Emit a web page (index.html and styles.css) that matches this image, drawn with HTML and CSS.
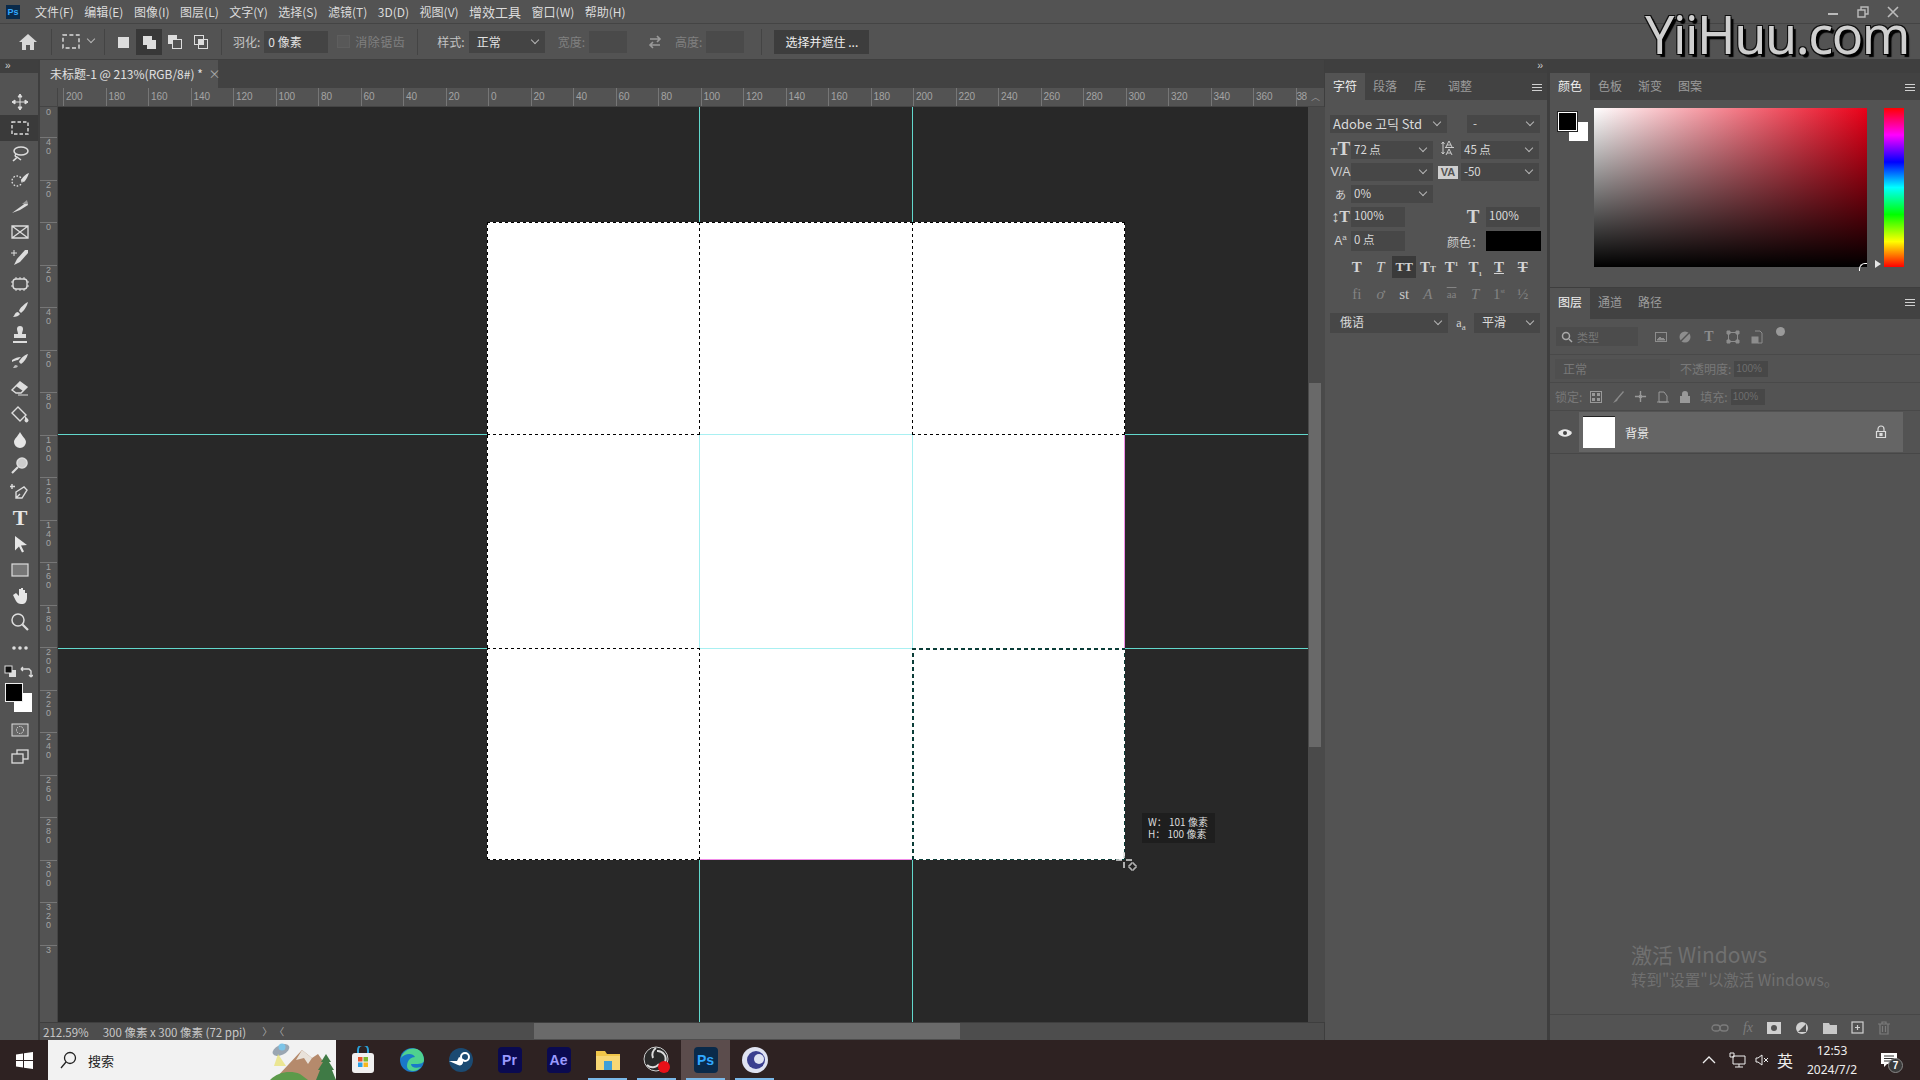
FILE: index.html
```html
<!DOCTYPE html>
<html lang="zh-CN">
<head>
  <meta charset="UTF-8">
  <title>Photoshop</title>
  <link rel="stylesheet" href="styles.css">
</head>
<body>
  <!-- menu -->
  <header class="menubar">
    <span class="ps-logo">Ps</span>
    <nav class="menu">
      <span>文件(F)</span><span>编辑(E)</span><span>图像(I)</span><span>图层(L)</span><span>文字(Y)</span><span>选择(S)</span><span>滤镜(T)</span><span>3D(D)</span><span>视图(V)</span><span class="menu-big">增效工具</span><span>窗口(W)</span><span>帮助(H)</span>
    </nav>
    <div class="win-btns">
      <svg width="14" height="14" viewBox="0 0 14 14"><path d="M2 9h10" stroke="#bbb" stroke-width="2"/></svg>
      <svg width="14" height="14" viewBox="0 0 14 14" fill="none" stroke="#bbb" stroke-width="1.4"><path d="M2 5h7v7H2zM5 5V2h7v7H9"/></svg>
      <svg width="14" height="14" viewBox="0 0 14 14"><path d="M2 2l10 10M12 2L2 12" stroke="#bbb" stroke-width="1.6"/></svg>
    </div>
  </header>

  <!-- options bar -->
  <div class="options">
    <svg class="opt-home" width="20" height="18" viewBox="0 0 20 18"><path d="M10 1L1 9h3v8h4v-5h4v5h4V9h3z" fill="#d8d8d8"/></svg>
    <i class="opt-sep sep-a"></i>
    <svg class="opt-marquee" width="18" height="16" viewBox="0 0 18 16"><rect x="1" y="1" width="16" height="13" fill="none" stroke="#ddd" stroke-width="1.4" stroke-dasharray="4 2.4"/></svg>
    <i class="chev chev-opt"></i>
    <i class="opt-sep sep-b"></i>
    <div class="modes">
      <span class="mode"><svg width="14" height="14"><rect x="2" y="2" width="11" height="11" fill="#ddd"/></svg></span>
      <span class="mode mode-on"><svg width="18" height="18"><path d="M3 3h9v4h4v9H7v-4H3z" fill="#ddd"/></svg></span>
      <span class="mode"><svg width="18" height="18"><rect x="2" y="2" width="9" height="9" fill="#ddd"/><rect x="6.5" y="6.5" width="9" height="9" fill="#535353" stroke="#ddd"/></svg></span>
      <span class="mode"><svg width="18" height="18" fill="none" stroke="#ddd"><rect x="2.5" y="2.5" width="9" height="9"/><rect x="6.5" y="6.5" width="9" height="9"/><rect x="7" y="7" width="4" height="4" fill="#ddd"/></svg></span>
    </div>
    <i class="opt-sep sep-c"></i>
    <span class="opt-label">羽化:</span>
    <span class="opt-input feather">0 像素</span>
    <i class="check"></i>
    <span class="opt-label off aa-label">消除锯齿</span>
    <i class="opt-sep sep-d"></i>
    <span class="opt-label">样式:</span>
    <span class="opt-input style-sel">正常<i class="chev"></i></span>
    <span class="opt-label off w-label">宽度:</span>
    <span class="opt-input box-w"></span>
    <svg class="opt-swap" width="16" height="16" viewBox="0 0 16 16" fill="none" stroke="#9a9a9a" stroke-width="1.6"><path d="M3 5h10M10 2l3 3-3 3M13 11H3M6 8l-3 3 3 3"/></svg>
    <span class="opt-label off h-label">高度:</span>
    <span class="opt-input box-h"></span>
    <i class="opt-sep sep-e"></i>
    <span class="mask-btn">选择并遮住 ...</span>
  </div>

  <div class="workspace">
    <!-- tools -->
    <aside class="toolbar">
      <div class="strip"><span class="arrows">››</span></div>
      <div class="tools">
        <span class="tool"><svg viewBox="0 0 20 20"><path d="M10 2v16M2 10h16M10 2L8 5h4zM10 18l-2-3h4zM2 10l3-2v4zM18 10l-3-2v4z" fill="#ddd" stroke="#ddd"/></svg></span>
        <span class="tool tool-on"><svg viewBox="0 0 20 20"><rect x="2" y="4" width="16" height="12" fill="none" stroke="#ddd" stroke-width="1.4" stroke-dasharray="3.5 2"/></svg></span>
        <span class="tool"><svg viewBox="0 0 20 20" fill="none" stroke="#ddd" stroke-width="1.5"><ellipse cx="11" cy="7" rx="7" ry="4"/><path d="M6 10c-2 2 0 3 1 3s-2 2-4 4M7 13l4 3"/></svg></span>
        <span class="tool"><svg viewBox="0 0 20 20"><circle cx="7" cy="11" r="5" fill="none" stroke="#ddd" stroke-width="1.3" stroke-dasharray="1.6 1.6"/><path d="M19 3c-3 1-7 4-8 8l3 1c2-2 4-6 5-9z" fill="#ddd"/></svg></span>
        <span class="tool"><svg viewBox="0 0 20 20"><path d="M2 17L17 6l1 3-8 5z" fill="#ddd"/><path d="M12 8l5-4 1 4z" fill="#999"/></svg></span>
        <span class="tool"><svg viewBox="0 0 20 20" fill="none" stroke="#ddd" stroke-width="1.3"><path d="M2 4h16v12H2zM2 4l16 12M18 4L2 16"/></svg></span>
        <span class="tool"><svg viewBox="0 0 20 20"><path d="M18 2l-3 0-8 9-3 6 6-3 8-9z" fill="#ddd"/><path d="M4 2v6M1 5h6" stroke="#ddd"/></svg></span>
        <span class="tool"><svg viewBox="0 0 20 20" fill="none" stroke="#ddd" stroke-width="1.4"><rect x="3" y="5" width="14" height="10" rx="3"/><path d="M6 3v2M10 3v2M14 3v2M6 15v2M10 15v2M14 15v2M1 8h2M1 12h2M17 8h2M17 12h2" stroke-width="1"/></svg></span>
        <span class="tool"><svg viewBox="0 0 20 20"><path d="M18 2c-4 2-8 6-9 9l2 2c3-2 6-7 7-11zM8 12c-3 0-3 3-5 5 3 0 6-1 7-3z" fill="#ddd"/></svg></span>
        <span class="tool"><svg viewBox="0 0 20 20"><path d="M7 3a3 3 0 0 1 6 0c0 2-1 3-1 5h4v4H4V8h4c0-2-1-3-1-5zM3 15h14v2H3z" fill="#ddd"/></svg></span>
        <span class="tool"><svg viewBox="0 0 20 20"><path d="M18 2c-4 1-8 5-9 8l2 2c3-2 6-6 7-10zM2 8c3-2 6-3 9-3l-3 3c-2 0-4 1-6 2z" fill="#ddd"/><path d="M6 13c-2 0-2 2-3 3 2 0 4 0 5-2z" fill="#bbb"/></svg></span>
        <span class="tool"><svg viewBox="0 0 20 20"><path d="M2 12l8-8 7 5-6 6H6z" fill="none" stroke="#ddd" stroke-width="1.4"/><path d="M10 4l7 5-4 4-7-5z" fill="#ddd"/><path d="M8 17h10" stroke="#ddd"/></svg></span>
        <span class="tool"><svg viewBox="0 0 20 20"><path d="M2 9l6-6 8 8-6 6z" fill="none" stroke="#ddd" stroke-width="1.4"/><path d="M15 12l3 3a2 2 0 1 1-3 0" fill="#ddd"/></svg></span>
        <span class="tool"><svg viewBox="0 0 20 20"><path d="M10 2c2 4 6 7 6 10a6 6 0 0 1-12 0c0-3 4-6 6-10z" fill="#e6e6e6"/></svg></span>
        <span class="tool"><svg viewBox="0 0 20 20" fill="none" stroke="#ddd" stroke-width="1.6"><circle cx="12" cy="7" r="5" fill="#ccc"/><path d="M8 11l-6 6" stroke-width="2.2"/></svg></span>
        <span class="tool"><svg viewBox="0 0 20 20" fill="none" stroke="#ddd" stroke-width="1.4"><path d="M6 10l8-5 3 3-5 8H6zM6 16l4-4"/><path d="M2 2v5M0 4.500h5"/></svg></span>
        <span class="tool tool-t">T</span>
        <span class="tool"><svg viewBox="0 0 20 20"><path d="M5 2l12 9-6 .5 3 6-2 1-3-6-4 4z" fill="#e6e6e6"/></svg></span>
        <span class="tool"><svg viewBox="0 0 20 20"><rect x="2" y="4" width="16" height="12" fill="#777" stroke="#ddd" stroke-width="1.2"/></svg></span>
        <span class="tool"><svg viewBox="0 0 20 20"><path d="M3 9l3 6c1 2 3 3 5 3h2c2 0 4-3 4-6V7h-2v3-6h-2v5V2h-2v7V3H9v7L6 7z" fill="#e6e6e6"/></svg></span>
        <span class="tool"><svg viewBox="0 0 20 20" fill="none" stroke="#ddd" stroke-width="1.5"><circle cx="8" cy="8" r="6"/><path d="M12.500 12.500L18 18" stroke-width="2.2"/></svg></span>
      </div>
      <div class="tool tool-more"><svg viewBox="0 0 20 20"><circle cx="4" cy="10" r="1.800" fill="#ddd"/><circle cx="10" cy="10" r="1.800" fill="#ddd"/><circle cx="16" cy="10" r="1.800" fill="#ddd"/></svg></div>
      <div class="mini-colors">
        <svg width="13" height="13"><rect x="5" y="5" width="7" height="7" fill="#ddd"/><rect x="1" y="1" width="7" height="7" fill="#111" stroke="#ddd"/></svg>
        <svg width="13" height="13" fill="none" stroke="#ddd" stroke-width="1.400"><path d="M1 4h8l2 2v6M1 4l2-2M1 4l2 2M11 12l-2-2M11 12l2-2"/></svg>
      </div>
      <div class="fg-bg"><i class="bg-sw"></i><i class="fg-sw"></i></div>
      <span class="tool tool-qm"><svg viewBox="0 0 20 20"><rect x="2" y="4" width="16" height="12" fill="#666" stroke="#ddd"/><circle cx="10" cy="10" r="3.500" fill="none" stroke="#ddd" stroke-dasharray="1.500 1"/></svg></span>
      <span class="tool"><svg viewBox="0 0 20 20" fill="none" stroke="#ddd" stroke-width="1.300"><rect x="7" y="3" width="11" height="9"/><rect x="2" y="7" width="11" height="9" fill="#535353"/></svg></span>
    </aside>

    <!-- document -->
    <main class="doc">
      <div class="doc-tabs">
        <div class="doc-tab">未标题-1 @ 213%(RGB/8#) * <span class="tab-x">×</span></div>
      </div>
      <div class="ruler-top">
        <div class="ruler-corner"></div>
        <div class="ticks-x">
          <span>200</span><span>180</span><span>160</span><span>140</span><span>120</span><span>100</span><span>80</span><span>60</span><span>40</span><span>20</span><span>0</span><span>20</span><span>40</span><span>60</span><span>80</span><span>100</span><span>120</span><span>140</span><span>160</span><span>180</span><span>200</span><span>220</span><span>240</span><span>260</span><span>280</span><span>300</span><span>320</span><span>340</span><span>360</span><span class="tick-end">38</span>
        </div>
        <div class="scroll-up">︿</div>
      </div>
      <div class="doc-mid">
        <div class="ticks-y">
          <span class="tick-first">0</span><span>4<br>0</span><span>2<br>0</span><span>0</span><span>2<br>0</span><span>4<br>0</span><span>6<br>0</span><span>8<br>0</span><span>1<br>0<br>0</span><span>1<br>2<br>0</span><span>1<br>4<br>0</span><span>1<br>6<br>0</span><span>1<br>8<br>0</span><span>2<br>0<br>0</span><span>2<br>2<br>0</span><span>2<br>4<br>0</span><span>2<br>6<br>0</span><span>2<br>8<br>0</span><span>3<br>0<br>0</span><span>3<br>2<br>0</span><span>3</span>
        </div>
        <div class="canvas">
          <i class="guide-v gv1"></i>
          <i class="guide-v gv2"></i>
          <i class="guide-h gh1"></i>
          <i class="guide-h gh2"></i>
          <div class="artboard">
            <div class="cell d-t d-l d-r d-b"></div>
            <div class="cell d-t c-b"></div>
            <div class="cell d-t d-l d-r d-b"></div>
            <div class="cell d-l c-r"></div>
            <div class="cell"></div>
            <div class="cell m-r c-l"></div>
            <div class="cell d-t d-l d-r d-b"></div>
            <div class="cell c-t m-b"></div>
            <div class="cell last d-t d-l d-r d-b"></div>
          </div>
          <div class="size-tip">W： 101 像素<br>H： 100 像素</div>
          <svg class="cursor" width="24" height="24" viewBox="0 0 24 24" fill="none" stroke="#ddd"><path d="M8 0v6M8 10v6M0 8h6M10 8h6" stroke-width="1.500"/><path d="M15 11h3v2h2v3h-2v2h-3v-2h-2v-3h2z" fill="#222"/></svg>
        </div>
        <div class="vscroll"><div class="vthumb"></div></div>
      </div>
      <div class="status">
        <span class="zoom-val">212.59%</span>
        <span class="doc-size">300 像素 x 300 像素 (72 ppi)</span>
        <span class="st-arrow">〉</span>
        <span class="st-arrow2">〈</span>
        <div class="hthumb"></div>
      </div>
    </main>

    <!-- character panel -->
    <section class="col-char">
      <div class="strip strip-r"><span class="arrows">››</span></div>
      <div class="tabs">
        <span class="tab on">字符</span><span class="tab">段落</span><span class="tab tab-s">库</span><span class="tab tab-l">调整</span>
        <span class="burger"></span>
      </div>
      <div class="char-body">
        <div class="row row-font">
          <span class="fld fw1">Adobe 고딕 Std<i class="chev"></i></span>
          <span class="fld fw2">-<i class="chev"></i></span>
        </div>
        <div class="row">
          <span class="ci ci-serif"><small>T</small>T</span><span class="fld fw3">72 点<i class="chev"></i></span>
          <span class="ci ci2"><svg width="18" height="18" viewBox="0 0 18 18" fill="none" stroke="#ccc"><path d="M3 3v12M1.500 5L3 3l1.500 2M1.500 13L3 15l1.500-2M6 8l3-6 3 6M6 16l3-6 3 6M7 14h4M7 6h4M5 8.500h9"/></svg></span><span class="fld fw4">45 点<i class="chev"></i></span>
        </div>
        <div class="row">
          <span class="ci ci-va">V/A</span><span class="fld fw3"><i class="chev"></i></span>
          <span class="ci ci2 ci-va2">VA</span><span class="fld fw4">-50<i class="chev"></i></span>
        </div>
        <div class="row">
          <span class="ci ci-ja">あ</span><span class="fld fw3">0%<i class="chev"></i></span>
        </div>
        <div class="row row-pct">
          <span class="ci ci-serif ci-big">↕T</span><span class="fld fw5">100%</span>
          <span class="ci ci-serif ci-t2">T</span><span class="fld fw6">100%</span>
        </div>
        <div class="row row-color">
          <span class="ci ci-base">A<sup>a</sup></span><span class="fld fw5">0 点</span>
          <span class="color-lb">颜色：</span><i class="black-sw"></i>
        </div>
        <div class="btn-row">
          <span>T</span><span class="it">T</span><span class="b-on">TT</span><span>T<small>T</small></span><span>T<sup>1</sup></span><span>T<sub>1</sub></span><span class="ul">T</span><span class="st">T</span>
        </div>
        <div class="btn-row dim">
          <span>fi</span><span class="it">ơ</span><span class="mid">st</span><span class="it">A</span><span class="sm">aa</span><span class="it">T</span><span>1<sup>st</sup></span><span>½</span>
        </div>
        <div class="row row-last">
          <span class="fld fw7">俄语<i class="chev"></i></span>
          <span class="ci aa">a<sub>a</sub></span>
          <span class="fld fw8">平滑<i class="chev"></i></span>
        </div>
      </div>
    </section>

    <!-- color + layers -->
    <section class="col-right">
      <div class="strip"></div>
      <div class="tabs">
        <span class="tab on">颜色</span><span class="tab">色板</span><span class="tab">渐变</span><span class="tab">图案</span>
        <span class="burger"></span>
      </div>
      <div class="color-body">
        <div class="swatches"><i class="bg-sw2"></i><i class="fg-sw2"></i></div>
        <div class="field"><i class="field-mark"></i></div>
        <i class="hue-arrow"></i>
        <div class="hue"></div>
      </div>
      <div class="tabs tabs-layers">
        <span class="tab on">图层</span><span class="tab">通道</span><span class="tab">路径</span>
        <span class="burger"></span>
      </div>
      <div class="layers-body">
        <div class="l-row l-filter">
          <span class="l-search"><svg width="12" height="12" viewBox="0 0 12 12" fill="none" stroke="#aaa" stroke-width="1.500"><circle cx="5" cy="5" r="3.500"/><path d="M8 8l3 3"/></svg>类型</span>
          <span class="l-icons">
            <svg width="14" height="14" viewBox="0 0 14 14" fill="none" stroke="#8d8d8d"><rect x="1.500" y="2.500" width="11" height="9"/><path d="M3 10l3-3 2 2 1-1 2 2z" fill="#8d8d8d"/></svg>
            <svg width="14" height="14" viewBox="0 0 14 14"><circle cx="7" cy="7" r="5.500" fill="#8d8d8d"/><path d="M3 11L11 3" stroke="#535353" stroke-width="1.500"/></svg>
            <b class="l-t">T</b>
            <svg width="14" height="14" viewBox="0 0 14 14" fill="none" stroke="#8d8d8d"><rect x="2.500" y="2.500" width="9" height="9"/><path d="M1 1h3v3H1zM10 1h3v3h-3zM1 10h3v3H1zM10 10h3v3h-3z" fill="#8d8d8d"/></svg>
            <svg width="14" height="14" viewBox="0 0 14 14" fill="none" stroke="#8d8d8d"><path d="M5 1h5l2 2v10H8"/><rect x="2" y="7" width="6" height="6" fill="#8d8d8d"/></svg>
            <i class="l-dot"></i>
          </span>
        </div>
        <div class="l-row l-blend">
          <span class="l-sel">正常</span>
          <span class="l-lb">不透明度:</span>
          <span class="l-pct">100%</span>
        </div>
        <div class="l-row l-lock">
          <span class="l-lb">锁定:</span>
          <span class="lock-icons">
            <svg width="12" height="12"><rect x="0.500" y="0.500" width="11" height="11" fill="none" stroke="#999"/><path d="M2 2h3v3H2zM7 7h3v3H7zM7 2h3v3H7zM2 7h3v3H2z" fill="#999"/></svg>
            <svg width="14" height="14" viewBox="0 0 14 14"><path d="M12 1L6 8l-1 1-3 4 4-2 1-2 6-7z" fill="#8a8a8a"/></svg>
            <svg width="13" height="13" viewBox="0 0 14 14"><path d="M7 1v12M1 7h12" stroke="#999" stroke-width="1.500"/><circle cx="7" cy="7" r="2" fill="#999"/></svg>
            <svg width="14" height="12" viewBox="0 0 14 12" fill="none" stroke="#999"><path d="M3 1v10h8V5L8 1zM1 11h12"/></svg>
            <svg width="12" height="13" viewBox="0 0 12 13"><path d="M3 6V4a3 3 0 0 1 6 0v2h2v7H1V6z" fill="#999"/></svg>
          </span>
          <span class="l-lb l-fill">填充:</span>
          <span class="l-pct">100%</span>
        </div>
        <div class="layer-row">
          <span class="eye"><svg width="14" height="10" viewBox="0 0 14 10"><path d="M0 5c3-5 11-5 14 0-3 5-11 5-14 0z" fill="#e8e8e8"/><circle cx="7" cy="5" r="2" fill="#444"/></svg></span>
          <div class="layer-item">
            <i class="thumb"></i>
            <span class="layer-name">背景</span>
            <svg class="layer-lock" width="12" height="14" viewBox="0 0 12 14" fill="none" stroke="#ddd" stroke-width="1.200"><path d="M3 6V4a3 3 0 0 1 6 0v2M1.500 6.500h9v6h-9z"/><rect x="5" y="8.500" width="2" height="2" fill="#ddd"/></svg>
          </div>
        </div>
        <div class="activate">
          <div class="act-1">激活 Windows</div>
          <div class="act-2">转到"设置"以激活 Windows。</div>
        </div>
        <div class="l-foot">
          <svg width="18" height="10" viewBox="0 0 18 10" fill="none" stroke="#7c7c7c" stroke-width="1.300"><rect x="1" y="2" width="8" height="6" rx="3"/><rect x="9" y="2" width="8" height="6" rx="3"/></svg>
          <span class="fx">fx</span>
          <svg width="14" height="12"><rect width="14" height="12" fill="#d0d0d0"/><circle cx="7" cy="6" r="3" fill="#535353"/></svg>
          <svg width="14" height="14" viewBox="0 0 14 14"><circle cx="7" cy="7" r="6" fill="#d0d0d0"/><path d="M3 11l8-8v8z" fill="#535353"/></svg>
          <svg width="14" height="12" viewBox="0 0 14 12"><path d="M0 1h6l1 2h7v9H0z" fill="#c8c8c8"/></svg>
          <svg width="13" height="13" viewBox="0 0 13 13" fill="none" stroke="#d0d0d0" stroke-width="1.200"><rect x="1" y="1" width="11" height="11"/><path d="M6.500 4v5M4 6.500h5"/></svg>
          <svg width="12" height="14" viewBox="0 0 12 14" fill="none" stroke="#7c7c7c" stroke-width="1.200"><path d="M0 3h12M4 3V1h4v2M2 3v10h8V3M4.500 5v6M7.500 5v6"/></svg>
        </div>
      </div>
    </section>
  </div>

  <!-- taskbar -->
  <footer class="taskbar">
    <span class="start"><svg width="17" height="17" viewBox="0 0 17 17"><path d="M0 2.500L7 1.500v6.500H0zM8 1.300L17 0v8H8zM0 9h7v6.500l-7-1zM8 9h9v8l-9-1.300z" fill="#fff"/></svg></span>
    <div class="search">
      <svg width="18" height="18" viewBox="0 0 18 18" fill="none" stroke="#222" stroke-width="1.300"><circle cx="11" cy="7" r="5.500"/><path d="M7 11l-5 6"/></svg>
      <span>搜索</span>
      <svg class="search-art" width="76" height="40" viewBox="0 0 76 40"><path d="M14 40L42 10l10 8 6-4 18 26z" fill="#b58a6c"/><path d="M42 10l-6 10 8-2 4 6 4-6z" fill="#e9e2da"/><path d="M10 40c8-8 20-10 30-6l8 6z" fill="#5c9a4a"/><path d="M66 14l5 8h-2l5 8h-2l4 10H56l4-10h-2l5-8h-2z" fill="#3f7a45"/><ellipse cx="21" cy="10" rx="9" ry="5" fill="#9aa6b2" transform="rotate(-25 21 10)"/><circle cx="22" cy="7" r="3.500" fill="#7cc4e8"/><path d="M18 14l-4 12h12z" fill="#e8e27a" opacity=".8"/></svg>
    </div>
    <div class="task-icons">
      <span class="ti"><svg width="26" height="28" viewBox="0 0 26 28"><path d="M8 7V4a5 5 0 0 1 10 0v3" fill="none" stroke="#2aa0d8" stroke-width="2"/><rect x="2" y="7" width="22" height="20" rx="3" fill="#f0f0f0"/><rect x="8" y="11" width="4.500" height="4.500" fill="#e8532a"/><rect x="13.500" y="11" width="4.500" height="4.500" fill="#7db82e"/><rect x="8" y="16.500" width="4.500" height="4.500" fill="#2aa0e8"/><rect x="13.500" y="16.500" width="4.500" height="4.500" fill="#f5b71e"/></svg></span>
      <span class="ti"><svg width="26" height="26" viewBox="0 0 26 26"><circle cx="13" cy="13" r="12" fill="#1a78c8"/><path d="M2 11C4 3 12 0 18 2c5 2 7 7 7 11 0 3-3 4-8 4h-5c0 3 4 5 10 3-3 4-8 5-12 3C6 21 8 10 16 10c-2-4-10-4-14 1z" fill="#4fd18f"/></svg></span>
      <span class="ti"><svg width="26" height="26" viewBox="0 0 26 26"><circle cx="13" cy="13" r="12" fill="#1b4a72"/><circle cx="17" cy="10" r="4" fill="none" stroke="#fff" stroke-width="2"/><path d="M1 14l9 4a3.500 3.500 0 0 0 5-4l2-1-6-3-2 4z" fill="#fff"/></svg></span>
      <span class="ti"><b class="app app-pr">Pr</b></span>
      <span class="ti"><b class="app app-ae">Ae</b></span>
      <span class="ti ti-open"><svg width="26" height="24" viewBox="0 0 26 24"><path d="M1 3h9l2 3h13v16H1z" fill="#f0c64a"/><path d="M1 8h24v14H1z" fill="#f7d774"/><rect x="9" y="13" width="8" height="9" fill="#3f9fd8"/></svg></span>
      <span class="ti ti-open"><svg width="28" height="28" viewBox="0 0 28 28"><circle cx="13" cy="13" r="12" fill="#2a2a2a" stroke="#ccc"/><path d="M13 2a8 8 0 0 0-3 10M4 19a8 8 0 0 0 12-1M22 16a8 8 0 0 0-8-11" fill="none" stroke="#ddd" stroke-width="2"/><circle cx="21" cy="21" r="6" fill="#e81018"/></svg></span>
      <span class="ti ti-open ti-on"><b class="app app-ps">Ps</b></span>
      <span class="ti ti-open"><svg width="28" height="28" viewBox="0 0 28 28"><circle cx="14" cy="14" r="13" fill="#dfe3f2"/><circle cx="15" cy="14" r="9" fill="#3a3f8f"/><circle cx="18" cy="13" r="5" fill="#dfe3f2"/></svg></span>
    </div>
    <div class="tray">
      <svg width="14" height="8" viewBox="0 0 14 8" fill="none" stroke="#eee" stroke-width="1.300"><path d="M1 7l6-6 6 6"/></svg>
      <svg width="17" height="16" viewBox="0 0 17 16" fill="none" stroke="#eee"><path d="M4 4h12v8H4zM1 1h4v4H1zM10 12v3M6 15h8"/></svg>
      <span class="tray-vol"><svg width="14" height="14" viewBox="0 0 14 14" fill="none" stroke="#eee"><path d="M1 5h2l4-3v10L3 9H1zM9 5l4 4M13 5L9 9"/></svg></span>
      <span class="tray-lang">英</span>
      <div class="clock"><div>12:53</div><div>2024/7/2</div></div>
      <span class="notify"><svg width="16" height="14" viewBox="0 0 16 14"><path d="M0 0h16v11H6l-3 3v-3H0z" fill="#fff"/><path d="M3 3h10M3 5.500h10M3 8h7" stroke="#333"/></svg><b class="badge">7</b></span>
    </div>
  </footer>

  <div class="watermark">YiiHuu.com</div>
</body>
</html>
```

FILE: styles.css
```css
* {
  box-sizing: border-box;
}
html, body {
  margin: 0;
  height: 100%;
}
body {
  width: 1920px;
  height: 1080px;
  overflow: hidden;
  display: flex;
  flex-direction: column;
  background: #535353;
  color: #d6d6d6;
  font-family: "Noto Sans CJK SC", "Noto Sans", sans-serif;
  font-size: 12px;
  position: relative;
}
i {
  display: block;
}

/* menu */
.menubar {
  height: 24px;
  flex: none;
  display: flex;
  align-items: center;
  background: #535353;
  border-bottom: 1px solid #444;
}
.ps-logo {
  width: 14px;
  height: 14px;
  margin-left: 6px;
  background: #0a2a4a;
  color: #31a8ff;
  font: bold 9px/14px "Liberation Sans", sans-serif;
  text-align: center;
}
.menu {
  display: flex;
  gap: 10.500px;
  margin-left: 15px;
  color: #dcdcdc;
  line-height: 22px;
}
.menu-big {
  font-size: 13px;
}
.win-btns {
  margin-left: auto;
  margin-right: 20px;
  display: flex;
  gap: 16px;
}

/* options */
.options {
  height: 36px;
  flex: none;
  display: flex;
  align-items: center;
  background: #535353;
  border-bottom: 1px solid #3f3f3f;
  position: relative;
}
.opt-home {
  margin-left: 18px;
}
.opt-sep {
  width: 1px;
  height: 26px;
  background: #444;
}
.sep-a { margin-left: 13px; }
.opt-marquee { margin-left: 10px; }
.chev-opt { margin-left: 8px; position: static !important; }
.sep-b { margin-left: 10px; }
.modes {
  display: flex;
  margin-left: 5px;
}
.mode {
  width: 26px;
  height: 26px;
  display: flex;
  align-items: center;
  justify-content: center;
}
.mode-on {
  background: #383838;
}
.sep-c { margin-left: 7px; }
.opt-label {
  color: #c4c4c4;
  margin-left: 11px;
}
.opt-label.off {
  color: #808080;
}
.opt-input {
  display: flex;
  align-items: center;
  height: 22px;
  background: #444;
  padding-left: 4px;
  color: #e2e2e2;
  position: relative;
  margin-left: 4px;
}
.feather { width: 64px; }
.check {
  width: 13px;
  height: 13px;
  margin-left: 9px;
  background: #585858;
  border: 1px solid #5e5e5e;
}
.aa-label { margin-left: 5px; letter-spacing: 0.5px; }
.sep-d { margin-left: 12px; margin-right: 19px; }
.options .sep-d + .opt-label { margin-left: 0; }
.style-sel { width: 76px; padding-left: 8px; }
.w-label { margin-left: 13px; }
.box-w { width: 38px; background: #4a4a4a; }
.opt-swap { margin-left: 20px; }
.h-label { margin-left: 12px; }
.box-h { width: 38px; background: #4a4a4a; }
.sep-e { margin-left: 17px; }
.mask-btn {
  margin-left: 12px;
  width: 95px;
  height: 24px;
  line-height: 23px;
  text-align: center;
  background: #3d3d3d;
  color: #ededed;
}

/* carets for selects */
.chev {
  position: absolute;
  right: 7px;
  top: 50%;
  width: 6px;
  height: 6px;
  margin-top: -5px;
  border-right: 1px solid #b5b5b5;
  border-bottom: 1px solid #b5b5b5;
  transform: rotate(45deg);
}

.workspace {
  flex: 1;
  min-height: 0;
  display: flex;
}
.strip {
  height: 13px;
  background: #3f3f3f;
  color: #cfcfcf;
  font: 10px/11px "Liberation Sans", sans-serif;
  padding-left: 5px;
}
.strip-r {
  text-align: right;
  padding-right: 5px;
}
.arrows {
  letter-spacing: -1px;
}

/* tools */
.toolbar {
  width: 40px;
  flex: none;
  background: #535353;
  border-right: 2px solid #3e3e3e;
  display: flex;
  flex-direction: column;
}
.tools {
  margin-top: 16px;
}
.tool {
  display: flex;
  width: 38px;
  height: 26px;
  align-items: center;
  justify-content: center;
  flex: none;
  padding-left: 2px;
}
.tool svg {
  width: 20px;
  height: 20px;
}
.tool-on {
  background: #3a3a3a;
}
.tool-t {
  font: bold 22px/26px "Liberation Serif", serif;
  color: #e6e6e6;
}
.mini-colors {
  display: flex;
  justify-content: space-between;
  padding: 0 5px 0 4px;
  margin-top: 4px;
}
.fg-bg {
  position: relative;
  height: 29px;
  margin: 5px 0 0 5px;
  width: 28px;
}
.fg-sw, .bg-sw {
  position: absolute;
  width: 18px;
  height: 19px;
}
.fg-sw {
  left: 0;
  top: 0;
  background: #000;
  border: 1px solid #eee;
}
.bg-sw {
  left: 9px;
  top: 10px;
  background: #fff;
}
.tool-qm {
  margin-top: 5px;
  margin-bottom: 1px;
}

/* document */
.doc {
  width: 1285px;
  flex: none;
  display: flex;
  flex-direction: column;
  border-right: 1px solid #3e3e3e;
}
.doc-tabs {
  height: 28px;
  background: #424242;
  flex: none;
}
.doc-tab {
  width: 178px;
  height: 28px;
  padding-left: 10px;
  line-height: 27px;
  background: #535353;
  color: #e0e0e0;
  font-size: 12px;
  white-space: nowrap;
}
.tab-x {
  color: #aaa;
  margin-left: 3px;
}
.ruler-top {
  height: 19px;
  flex: none;
  display: flex;
  background: #535353;
  border-bottom: 1px solid #444;
}
.ruler-corner {
  width: 18px;
  flex: none;
  border-right: 1px solid #444;
}
.ticks-x {
  flex: 1;
  display: flex;
  padding-left: 5px;
  overflow: hidden;
  white-space: nowrap;
}
.ticks-x span {
  width: 42.5px;
  flex: none;
  border-left: 1px solid #767676;
  padding-left: 2px;
  font: 10px/18px "Liberation Sans", sans-serif;
  color: #a4a4a4;
}
.ticks-x .tick-end {
  width: 12.500px;
  padding-left: 0;
  letter-spacing: -0.500px;
}
.scroll-up {
  width: 17px;
  flex: none;
  font-size: 9px;
  line-height: 18px;
  text-align: center;
  color: #999;
}
.doc-mid {
  flex: 1;
  min-height: 0;
  display: flex;
}
.ticks-y {
  width: 18px;
  flex: none;
  overflow: hidden;
  border-right: 1px solid #444;
  background: #535353;
}
.ticks-y span {
  display: block;
  height: 42.5px;
  padding-left: 6px;
  border-top: 1px solid #767676;
  font: 9px/9px "Liberation Sans", sans-serif;
  color: #a4a4a4;
}
.ticks-y .tick-first {
  height: 30px;
  border-top: none;
  padding-top: 1px;
}
.canvas {
  width: 1250px;
  flex: none;
  background: #282828;
  position: relative;
  padding: 115px 0 0 429px;
  overflow: hidden;
}
.artboard {
  position: relative;
  z-index: 1;
  width: 638px;
  height: 638px;
  background: #fff;
  display: grid;
  grid-template-columns: 213px 212px 213px;
  grid-template-rows: 213px 213px 212px;
}
/* each cell paints its own selection edges */
.cell {
  background-image: var(--top, none), var(--right, none), var(--bottom, none), var(--left, none);
  background-position: top, right, bottom, left;
  background-size: 100% 1px, 1px 100%, 100% 1px, 1px 100%;
  background-repeat: no-repeat;
}
.cell.last {
  background-size: 100% 2px, 1px 100%, 100% 1px, 2px 100%;
  --dash-x: repeating-linear-gradient(90deg, #0b3d38 0 4px, transparent 4px 7px);
  --dash-y: repeating-linear-gradient(0deg, #0b3d38 0 4px, transparent 4px 7px);
}
.cell {
  --dash-x: repeating-linear-gradient(90deg, #000 0 3px, transparent 3px 6px);
  --dash-y: repeating-linear-gradient(0deg, #000 0 3px, transparent 3px 6px);
  --cyan: linear-gradient(#a9f0f2, #a9f0f2);
  --pink: linear-gradient(#f08ce8, #f08ce8);
}
.cell.last {
  --dash-x: repeating-linear-gradient(90deg, #0b3d38 0 4px, transparent 4px 7px);
  --dash-y: repeating-linear-gradient(0deg, #0b3d38 0 4px, transparent 4px 7px);
}
.d-t { --top: var(--dash-x); }
.d-b { --bottom: var(--dash-x); }
.d-l { --left: var(--dash-y); }
.d-r { --right: var(--dash-y); }
.c-t { --top: var(--cyan); }
.c-b { --bottom: var(--cyan); }
.c-l { --left: var(--cyan); }
.c-r { --right: var(--cyan); }
.m-r { --right: var(--pink); }
.m-b { --bottom: var(--pink); }
.guide-v, .guide-h {
  position: absolute;
  background: #62d8cc;
}
.guide-v {
  top: 0;
  bottom: 0;
  width: 1px;
}
.guide-h {
  left: 0;
  right: 0;
  height: 1px;
}
.gv1 { left: 641px; }
.gv2 { left: 854px; }
.gh1 { top: 327px; }
.gh2 { top: 541px; }
.size-tip {
  position: absolute;
  left: 1084px;
  top: 706px;
  width: 73px;
  height: 30px;
  padding: 3px 0 0 6px;
  background: #1e1e1e;
  color: #dcdcdc;
  font-size: 10px;
  line-height: 12px;
  white-space: nowrap;
  z-index: 3;
}
.cursor {
  position: absolute;
  left: 1058px;
  top: 745px;
  z-index: 3;
}
.vscroll {
  width: 17px;
  flex: none;
  background: #4a4a4a;
  padding: 276px 4px 0 1px;
}
.vthumb {
  height: 364px;
  background: #696969;
}
.status {
  height: 18px;
  flex: none;
  background: #4d4d4d;
  border-top: 1px solid #3e3e3e;
  display: flex;
  align-items: center;
  position: relative;
  color: #c8c8c8;
  font-size: 11.500px;
  white-space: nowrap;
}
.zoom-val {
  margin-left: 3px;
}
.doc-size {
  margin-left: 14px;
}
.st-arrow, .st-arrow2 {
  color: #aaa;
  font-size: 10px;
}
.st-arrow { margin-left: 16px; }
.st-arrow2 { margin-left: 2px; }
.hthumb {
  position: absolute;
  left: 494px;
  top: 0;
  width: 426px;
  height: 16px;
  background: #6a6a6a;
}

/* panel tabs */
.tabs {
  height: 27px;
  display: flex;
  background: #424242;
  color: #9c9c9c;
  position: relative;
  flex: none;
}
.tab {
  width: 40px;
  line-height: 26px;
  text-align: center;
  font-size: 12px;
}
.tab-s { width: 30px; }
.tab-l { width: 50px; }
.tab.on {
  background: #535353;
  color: #f0f0f0;
}
.burger {
  position: absolute;
  right: 5px;
  top: 11px;
  width: 10px;
  height: 7px;
  border-top: 1px solid #d0d0d0;
  border-bottom: 1px solid #d0d0d0;
}
.burger::after {
  content: "";
  display: block;
  margin-top: 2px;
  border-top: 1px solid #d0d0d0;
}

/* character panel */
.col-char {
  width: 225px;
  flex: none;
  background: #535353;
  border-right: 3px solid #3e3e3e;
}
.char-body {
  padding: 15px 6px 0 5px;
}
.row {
  display: flex;
  align-items: center;
  height: 18px;
  margin-bottom: 4px;
}
.row-font {
  margin-bottom: 8px;
}
.row-pct {
  height: 20px;
  margin-top: 1px;
}
.row-color {
  height: 20px;
  margin-bottom: 5px;
}
.row-last {
  height: 20px;
  margin-top: 8px;
}
.fld {
  display: block;
  position: relative;
  height: 100%;
  background: #474747;
  color: #dadada;
  padding-left: 3px;
  line-height: 17px;
  font-size: 11.500px;
  white-space: nowrap;
}
.fw1 { width: 117px; font-size: 13px; }
.fw2 { width: 73px; margin-left: 20px; padding-left: 6px; }
.fw3 { width: 82px; }
.fw4 { width: 78px; }
.fw5 { width: 54px; }
.fw6 { width: 54px; }
.fw7 { width: 118px; padding-left: 10px; font-size: 12px; }
.fw8 { width: 66px; padding-left: 8px; font-size: 12px; }
.ci {
  width: 21px;
  flex: none;
  text-align: center;
  color: #d4d4d4;
  line-height: 18px;
}
.ci-serif {
  font: bold 19px/18px "Liberation Serif", serif;
}
.ci-serif small {
  font-size: 10px;
}
.ci2 {
  width: 25px;
  margin-left: 3px;
}
.ci-va {
  font: 12.500px/18px "Liberation Sans", sans-serif;
}
.ci-va2 {
  font: bold 11px/13px "Liberation Sans", sans-serif;
  background: #cfcfcf;
  color: #535353;
  height: 13px;
  width: 20px;
  margin-left: 5px;
  margin-right: 3px;
}
.ci-ja {
  font-size: 11px;
}
.ci-big {
  font-size: 16px;
  white-space: nowrap;
}
.ci-t2 {
  width: 26px;
  margin-left: 55px;
}
.ci-base {
  font: 12px/18px "Liberation Sans", sans-serif;
}
.ci-base sup {
  font-size: 8px;
  line-height: 0;
}
.color-lb {
  margin-left: 42px;
  width: 39px;
  color: #cfcfcf;
}
.black-sw {
  width: 55px;
  height: 20px;
  background: #000;
}
.btn-row {
  display: flex;
  padding-left: 15px;
  height: 22px;
  font: bold 15px/22px "Liberation Serif", serif;
  color: #d4d4d4;
  margin-bottom: 5px;
}
.btn-row span {
  width: 23.700px;
  text-align: center;
  white-space: nowrap;
}
.btn-row small { font-size: 9px; }
.btn-row sup, .btn-row sub { font-size: 7px; line-height: 0; }
.btn-row .it { font-style: italic; font-weight: normal; }
.btn-row .b-on { background: #3a3a3a; font-size: 13px; }
.btn-row .ul { text-decoration: underline; }
.btn-row .st { text-decoration: line-through; }
.btn-row.dim { color: #848484; font-weight: normal; }
.btn-row .mid { color: #c8c8c8; }
.btn-row .sm { font-size: 11px; text-decoration: overline; }
.aa {
  font: 12px/18px "Liberation Serif", serif;
  width: 26px;
}
.aa sub { font-size: 9px; line-height: 0; }

/* color panel */
.col-right {
  flex: 1;
  min-width: 0;
  display: flex;
  flex-direction: column;
  background: #535353;
}
.color-body {
  height: 188px;
  flex: none;
  display: flex;
  padding-top: 8px;
  position: relative;
  border-bottom: 1px solid #3e3e3e;
}
.swatches {
  position: relative;
  width: 44px;
  flex: none;
}
.fg-sw2, .bg-sw2 {
  position: absolute;
  width: 19px;
  height: 19px;
}
.fg-sw2 {
  left: 8px;
  top: 4px;
  background: #000;
  border: 1px solid #fff;
  outline: 1px solid #222;
}
.bg-sw2 {
  left: 19px;
  top: 14px;
  background: #fff;
}
.field {
  width: 273px;
  height: 159px;
  flex: none;
  position: relative;
  background: linear-gradient(to bottom, transparent, #000), linear-gradient(to right, #fff, #ea0018);
}
.field-mark {
  position: absolute;
  right: 0;
  bottom: -4px;
  width: 8px;
  height: 8px;
  border-left: 1px solid #fff;
  border-top: 1px solid #fff;
  border-top-left-radius: 6px;
}
.hue-arrow {
  width: 0;
  height: 0;
  margin: 152px 0 0 8px;
  border-left: 6px solid #e6e6e6;
  border-top: 4px solid transparent;
  border-bottom: 4px solid transparent;
}
.hue {
  width: 20px;
  height: 159px;
  margin-left: 3px;
  background: linear-gradient(to bottom, #f00 0%, #f0f 17%, #00f 34%, #0ff 50%, #0f0 67%, #ff0 84%, #f00 100%);
}
.tabs-layers {
  height: 31px;
}
.tabs-layers .tab {
  line-height: 28px;
}
.layers-body {
  flex: 1;
  min-height: 0;
  display: flex;
  flex-direction: column;
  position: relative;
  color: #787878;
}
.l-row {
  display: flex;
  align-items: center;
  height: 28px;
  padding-left: 5px;
  border-bottom: 1px solid #494949;
}
.l-filter { height: 36px; padding-left: 6px; }
.l-search {
  display: flex;
  align-items: center;
  gap: 4px;
  width: 82px;
  height: 19px;
  padding-left: 5px;
  background: #4c4c4c;
  font-size: 11px;
}
.l-icons {
  display: flex;
  align-items: center;
  gap: 10px;
  margin-left: 16px;
}
.l-t {
  width: 14px;
  text-align: center;
  font: bold 14px/14px "Liberation Serif", serif;
  color: #8d8d8d;
}
.l-dot {
  width: 9px;
  height: 9px;
  border-radius: 50%;
  background: #9a9a9a;
  margin: -10px 0 0 2px;
}
.l-sel {
  width: 115px;
  padding-left: 8px;
  height: 20px;
  line-height: 19px;
  background: #4f4f4f;
}
.l-blend .l-lb { margin-left: 10px; }
.l-pct {
  width: 34px;
  height: 16px;
  margin-left: 3px;
  background: #474747;
  color: #6e6e6e;
  font: 10px/16px "Liberation Sans", sans-serif;
  padding-left: 2px;
}
.lock-icons {
  display: flex;
  align-items: center;
  gap: 9px;
  margin-left: 8px;
}
.l-fill { margin-left: 9px; }
.layer-row {
  display: flex;
  height: 42px;
  margin-top: 1px;
  padding-right: 17px;
  border-bottom: 1px solid #474747;
}
.eye {
  width: 29px;
  display: flex;
  align-items: center;
  justify-content: center;
  flex: none;
  padding-left: 1px;
}
.layer-item {
  flex: 1;
  display: flex;
  align-items: center;
  background: #656565;
  padding-left: 4px;
  height: 40px;
}
.thumb {
  width: 32px;
  height: 32px;
  background: #fff;
  border-top: 1px solid #222;
}
.layer-name {
  margin-left: 10px;
  color: #eaeaea;
}
.layer-lock {
  margin-left: auto;
  margin-right: 16px;
}
.activate {
  position: absolute;
  left: 81px;
  top: 621px;
  color: #707070;
  white-space: nowrap;
}
.act-1 {
  font-size: 21px;
  line-height: 28px;
}
.act-2 {
  font-size: 15.500px;
  line-height: 22px;
}
.l-foot {
  position: absolute;
  left: 0;
  right: 0;
  bottom: 0;
  height: 26px;
  border-top: 1px solid #474747;
  display: flex;
  align-items: center;
  justify-content: flex-end;
  gap: 14px;
  padding-right: 30px;
}
.fx {
  font: italic 14px "Liberation Serif", serif;
  color: #7c7c7c;
}

/* taskbar */
.taskbar {
  height: 40px;
  flex: none;
  display: flex;
  align-items: center;
  background: #2e2222;
  color: #eee;
}
.start {
  width: 48px;
  display: flex;
  justify-content: center;
}
.search {
  width: 288px;
  height: 40px;
  background: #f2f2f2;
  color: #222;
  display: flex;
  align-items: center;
  gap: 11px;
  padding-left: 11px;
  font-size: 13px;
  position: relative;
}
.search-art {
  position: absolute;
  right: 0;
  top: 0;
}
.task-icons {
  display: flex;
  margin-left: 2px;
}
.ti {
  width: 49px;
  height: 40px;
  display: flex;
  align-items: center;
  justify-content: center;
  position: relative;
}
.ti-open::after {
  content: "";
  position: absolute;
  left: 5px;
  right: 5px;
  bottom: 0;
  height: 2px;
  background: #7ab8e8;
}
.ti-on {
  background: #5b4c4c;
}
.app {
  width: 24px;
  height: 26px;
  border-radius: 4px;
  text-align: center;
  font: bold 14px/26px "Liberation Sans", sans-serif;
}
.app-pr { background: #0a0a50; color: #9a9aff; }
.app-ae { background: #0a0a50; color: #9a9aff; }
.app-ps { background: #0a2a4a; color: #31a8ff; }
.tray {
  margin-left: auto;
  display: flex;
  align-items: center;
  position: relative;
  padding-right: 17px;
}
.tray svg {
  flex: none;
}
.tray > svg:nth-child(2) {
  margin-left: 13px;
}
.tray-vol {
  margin-left: 9px;
  display: flex;
}
.tray-lang {
  margin-left: 8px;
  font-size: 16px;
}
.clock {
  width: 72px;
  margin-left: 3px;
  text-align: center;
  font: 12px/19px "Noto Sans", sans-serif;
  white-space: nowrap;
}
.notify {
  position: relative;
  width: 22px;
  margin-left: 13px;
  display: flex;
}
.badge {
  position: absolute;
  left: 7px;
  top: 5px;
  width: 15px;
  height: 15px;
  border-radius: 50%;
  background: #3a3a3a;
  border: 1px solid #888;
  color: #fff;
  text-align: center;
  font: bold 10px/13px "Liberation Sans", sans-serif;
}

/* watermark over the top right */
.watermark {
  position: absolute;
  left: 1645px;
  top: -1px;
  font: 52px/70px "Noto Sans", sans-serif;
  letter-spacing: -1.400px;
  color: #cfcfcf;
  text-shadow: 1px 1px 0 #000, -1px -1px 0 #111, 1px -1px 0 #111, -1px 1px 0 #111, 3px 3px 1px #000;
  white-space: nowrap;
}
```
